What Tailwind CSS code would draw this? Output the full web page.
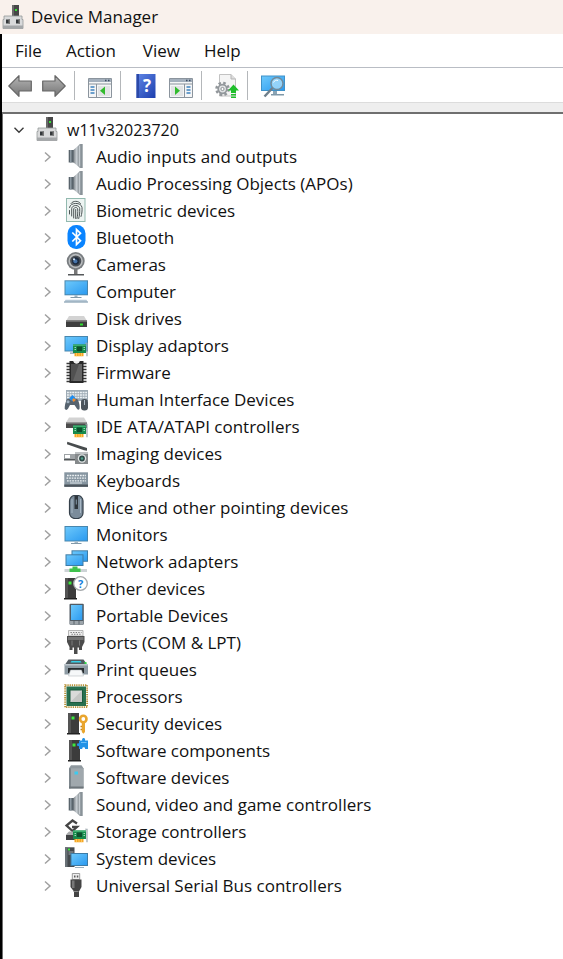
<!DOCTYPE html>
<html lang="en">
<head>
  <meta charset="UTF-8">
  <title>Device Manager</title>
  <script src="https://cdn.jsdelivr.net/npm/@tailwindcss/browser@4"></script>
</head>
<body class="min-h-screen flex flex-col bg-white text-[#111] font-['Open_Sans','Noto_Sans',sans-serif] text-[17px] leading-6">

  <!-- icon sheet -->
  <svg class="absolute w-0 h-0" aria-hidden="true">
    <defs>
      <linearGradient id="screen" x1="0" y1="0" x2="1" y2="1"><stop offset="0" stop-color="#6cc8fb"/><stop offset="1" stop-color="#2b9af0"/></linearGradient>
      <linearGradient id="steel" x1="0" y1="0" x2="1" y2="0"><stop offset="0" stop-color="#7d8489"/><stop offset=".5" stop-color="#c5cbd0"/><stop offset="1" stop-color="#8b9398"/></linearGradient>
      <linearGradient id="arrow" x1="0" y1="0" x2="0" y2="1"><stop offset="0" stop-color="#b5b5b5"/><stop offset="1" stop-color="#757575"/></linearGradient>
      <linearGradient id="help" x1="0" y1="0" x2="1" y2="1"><stop offset="0" stop-color="#5f86e6"/><stop offset="1" stop-color="#1d3fae"/></linearGradient>
    </defs>

    <symbol id="card" viewBox="0 0 15 14">
      <rect x="0" y="2" width="13" height="8.5" fill="#178a4c"/>
      <path d="M0 2h13v1.500H0z" fill="#3eae70"/>
      <rect x="4" y="4" width="5" height="4.500" fill="#0c4f2c"/>
      <path d="M1.500 5h1.500M1.500 7h1.500M10.500 5h1.500M10.500 7h1.500" stroke="#a9e3be" stroke-width=".9"/>
      <rect x="1.500" y="10.500" width="9" height="3.500" fill="#f5a623"/>
      <path d="M3.500 10.500v3.500M6 10.500v3.500M8.500 10.500v3.500" stroke="#ffd47a" stroke-width=".7"/>
      <path d="M12 .5h2V14" fill="none" stroke="#9aa5ab" stroke-width="1.200"/>
    </symbol>
    <symbol id="tower" viewBox="0 0 13 22">
      <path d="M1 0h11v20H1z" fill="#3c3c3c"/>
      <path d="M1 0h3v20H1z" fill="#545454"/>
      <path d="M0 20h13v1.500H0z" fill="#222"/>
      <rect x="4.500" y="3.500" width="3" height="3" fill="#3de83d"/>
    </symbol>

    <symbol id="pc" viewBox="0 0 24 24">
      <path d="M11 0h7v12h-7z" fill="#474747"/><path d="M11 0h2v12h-2z" fill="#6a6a6a"/>
      <rect x="14" y="4" width="2" height="2" fill="#37e337"/>
      <path d="M3 11h18v3.500h1V23.500H2v-9h1z" fill="#d9dadb" stroke="#96999b" stroke-width=".8"/>
      <path d="M2 20.500h20v3H2z" fill="#a4a7a9"/>
      <path d="M5 14.500h4v4H5zM15 14.500h4v4h-4z" fill="#34383b"/>
      <path d="M7.500 14.500h1.500v4H7.500zM17.500 14.500h1.500v4h-1.500z" fill="#777"/>
    </symbol>
    <symbol id="speaker" viewBox="0 0 24 24">
      <path d="M4.700 6H10v12.500H4.700z" fill="#59646c"/><path d="M6 6h1.500v12.500H6z" fill="#8d99a2"/>
      <path d="M9.500 6 15.500 .5v23l-6-5z" fill="url(#steel)"/>
      <path d="M15 .8 16.500 0h2.200v24h-2.200L15 23.200z" fill="#899298"/><path d="M15.700 1.500v21" stroke="#dde2e5" stroke-width=".9"/>
    </symbol>
    <symbol id="finger" viewBox="0 0 24 24">
      <rect x="2.500" y=".5" width="18.500" height="23" fill="#edf4f2" stroke="#92b9af"/>
      <g fill="none" stroke="#4d5557" stroke-width="1" stroke-linecap="round">
        <path d="M7 5.500c2-3 7.500-3 9.500 0M5.500 9.500c.5-5.500 12-5.500 12.500 0 .2 3 0 6-1 9M5.500 12.500v3.500M7.700 18v-7.500c.5-4 7.600-4 8 0 .2 4-.2 7-1 10M9.700 20v-9c.4-2 3.600-2 4 0 .2 3.500 0 6.500-.7 9.500M11.700 11.500v9"/>
      </g>
    </symbol>
    <symbol id="bluetooth" viewBox="0 0 24 24">
      <rect x="3.500" y="0" width="18" height="24" rx="8.500" fill="#0a84ff"/>
      <path d="M8.300 7.500 16.500 15.700 12.500 19.500V4.500l4 3.800L8.300 16.500" fill="none" stroke="#fff" stroke-width="1.700"/>
    </symbol>
    <symbol id="camera" viewBox="0 0 24 24">
      <path d="M10 17h3.500v5H10z" fill="#777"/><path d="M4 22h16v1.500H4z" fill="#55585a"/>
      <circle cx="11.700" cy="9" r="9" fill="#797d80"/><circle cx="11.700" cy="9" r="7.200" fill="#b9bcbe"/>
      <circle cx="11.700" cy="9" r="5.600" fill="#4a4f55"/><circle cx="11.700" cy="9" r="3.700" fill="#1e2c40"/>
      <circle cx="11.400" cy="9.200" r="2" fill="#4674ab"/><circle cx="10" cy="7.300" r="1.100" fill="#d6e8fa"/>
    </symbol>
    <symbol id="computer" viewBox="0 0 24 24">
      <path d="M.5 1.300h23.500v15H.5z" fill="#4886ad"/><path d="M1.500 2.300h21.500v13h-21.500z" fill="url(#screen)"/>
      <path d="M10.500 16.300h3v2h-3z" fill="#9fb3c0"/><path d="M6.500 18h11v1h-11z" fill="#8299a8"/>
      <path d="M1.500 20.800h21l1.500 2.700H0z" fill="#b5c7d5"/><path d="M0 22.500h24v1H0z" fill="#8fa5b5"/>
    </symbol>
    <symbol id="disk" viewBox="0 0 24 24">
      <path d="M5 10h15l3 5H2z" fill="#d3d3d3"/><path d="M2 14.500h21V21H2z" fill="#3f3f3f"/>
      <path d="M2 14.500h21v1.300H2z" fill="#777"/><path d="M16 17.500h3v2h-3z" fill="#2fe02f"/>
    </symbol>
    <symbol id="display" viewBox="0 0 24 24">
      <path d="M.5 3h23.500v15.500H.5z" fill="#4886ad"/><path d="M1.500 4h21.500v13.500h-21.500z" fill="url(#screen)"/>
      <path d="M6 19.500h6v1.200H6z" fill="#8299a8"/><use href="#card" x="9" y="9.500" width="15" height="14"/>
    </symbol>
    <symbol id="firmware" viewBox="0 0 24 24">
      <path d="M2.500 3.500h20M2.500 6.500h20M2.500 9.500h20M2.500 12.500h20M2.500 15.500h20M2.500 18.500h20M2.500 21.500h20" stroke="#383838" stroke-width="1.700"/>
      <path d="M5.500 1h4c.5 3.500 5.500 3.500 6 0h4v22h-14z" fill="#292929"/><path d="M7 4h11v17H7z" fill="#515151"/><path d="M15 4h3v17h-9z" fill="#656565"/>
      <path d="M9.500 1c.5 3.500 5.500 3.500 6 0z" fill="#eee"/>
    </symbol>
    <symbol id="hid" viewBox="0 0 24 24">
      <path d="M2 3h22v11H2z" fill="#9eabb5"/><path d="M3 5.500h20M3 8h20M3 10.500h20" stroke="#edf2f5" stroke-width="1.400" stroke-dasharray="1.900 .7"/>
      <path d="M2.500 13c1-1.800 3-1.500 4-.5h3.500c1.500-1.300 3-1 4 .5 1.300 3 2 6 1.500 9-1 1.500-2.200.8-3.500-1.700L10.500 18H6l-2 3.800c-1.200 1.700-2.700 1.200-3.300 0 0-3 .6-6 1.800-8.800z" fill="#56636f"/>
      <circle cx="4" cy="14.800" r="1.500" fill="#9fb0bf"/><path d="m8.500 8 3.300 3.300-3.300 3.300-3.300-3.300z" fill="#1d8df0"/><path d="m9.500 11 2.500 1.800-2.300 2.200-1.700-2z" fill="#f08a2b"/>
      <rect x="17" y="12" width="7" height="11.500" rx="3.200" fill="#4b545c"/><path d="M20.500 13v5" stroke="#aebbc6"/>
    </symbol>
    <symbol id="ide" viewBox="0 0 24 24">
      <path d="M5 3.500h15l3 5H2z" fill="#d3d3d3"/><path d="M2 8.500h21v5.500H2z" fill="#4c4c4c"/><path d="M2 8.300h21v1.200H2z" fill="#969696"/>
      <use href="#card" x="9" y="9.500" width="15" height="14"/>
    </symbol>
    <symbol id="imaging" viewBox="0 0 24 24">
      <path d="M3.300 .8 23 7v2.800L20 9.300 3 3.200z" fill="#484c4e"/>
      <path d="M0 13h11v5.500H0z" fill="#9ea3a6"/><path d="M1 14h5v3H1z" fill="#fff"/><path d="M0 18h11v1.500H0z" fill="#535759"/>
      <path d="M11 11.500h13V23H11z" fill="#85898b"/><path d="M11 11.500h13V13H11z" fill="#bfc3c5"/>
      <circle cx="18" cy="17.500" r="4.200" fill="#dfe3e4"/><circle cx="18" cy="17.500" r="2.900" fill="#304a48"/><circle cx="18" cy="17.500" r="1.200" fill="#52a18c"/>
    </symbol>
    <symbol id="keyboard" viewBox="0 0 24 24">
      <path d="M.3 4.300H24v14.500H.3z" fill="#8796a1"/><path d="M.3 16.500H24v2.300H.3z" fill="#4d565d"/>
      <path d="M3 7.500h19M2.500 10.200h19.500M3 12.800h19" stroke="#f0f4f6" stroke-width="1.300" stroke-dasharray="1.700 .9"/><path d="M6 15h12" stroke="#dde4e8"/>
    </symbol>
    <symbol id="mouse" viewBox="0 0 24 24">
      <rect x="5.500" y=".5" width="13.500" height="23" rx="5.500" fill="#7b8c9b" stroke="#35404a" stroke-width="1.200"/>
      <path d="M8 4v14M16.500 4v14" stroke="#a8b7c4"/><path d="M10.500 1h3.500v13h-3.500z" fill="#2e353b"/><path d="M11.700 4.500h1.300v5h-1.300z" fill="#718290"/>
    </symbol>
    <symbol id="monitor" viewBox="0 0 24 24">
      <path d="M.5 4H24v15.500H.5z" fill="#4886ad"/><path d="M1.500 5H23v13.500H1.500z" fill="url(#screen)"/>
      <path d="M10.500 19.500h3.500V21h-3.500z" fill="#a8bac6"/><path d="M7 21h10.500v1H7z" fill="#8299a8"/>
    </symbol>
    <symbol id="network" viewBox="0 0 24 24">
      <path d="M7.500 1.300H24v11.500H7.500z" fill="#3d7ba5"/><path d="M8.500 2.300H23v9.500H8.500z" fill="url(#screen)"/>
      <path d="M1.500 5.300h18V17h-18z" fill="#3d7ba5"/><path d="M2.500 6.300h16V16h-16z" fill="url(#screen)"/>
      <path d="M.5 20H23v3H.5z" fill="#cdd3d6"/><path d="M8.500 17.500h5V19.500h3v3.500H5.500v-3.500h3z" fill="#3fc24d"/>
    </symbol>
    <symbol id="other" viewBox="0 0 24 24">
      <use href="#tower" x="0" y="2" width="13" height="22"/>
      <circle cx="16.500" cy="7.500" r="6.800" fill="#fff" stroke="#a5a9ac" stroke-width="1.300"/>
      <text x="16.500" y="11.500" text-anchor="middle" font-family="Open Sans" font-size="11" font-weight="700" fill="#1681dc">?</text>
    </symbol>
    <symbol id="portable" viewBox="0 0 24 24">
      <rect x="5.500" y=".7" width="14.300" height="21" rx="1" fill="#505b64"/><path d="M7 2h11.300v15H7z" fill="url(#screen)"/>
      <path d="M6 18h13.300v3.500H6z" fill="#9da5ab"/><path d="M10 18v3.500M15 18v3.500" stroke="#5b656d"/>
    </symbol>
    <symbol id="ports" viewBox="0 0 24 24">
      <path d="M4.500.5h14.500V6H4.500z" fill="#eee" stroke="#a4a4a4" stroke-width=".8"/><path d="M6.500 2.500h11M7.500 4.300h9" stroke="#777" stroke-dasharray="1.300 1.300"/>
      <path d="M3 6h17.500v6l-2.500 5v3h-3v-2.500h-1.500V24h-3.500v-6.500H8.500V20h-3v-3L3 12z" fill="#4c4c4c"/><path d="M4 7h15.500v3H4z" fill="#737373"/><path d="M8 10.500v5M15.500 10.500v5" stroke="#7b7b7b"/>
    </symbol>
    <symbol id="printer" viewBox="0 0 24 24">
      <path d="M4.500 2.500h15l3.500 5H1z" fill="#525b61"/><path d="M7.500 4h9l1 1.600h-11z" fill="#35cfe6"/>
      <path d="M.5 7h23.500v10.500H.5z" fill="#8d9aa3"/><path d="M.5 7h23.500v1.500H.5z" fill="#bac4cb"/><path d="M20.500 5h2v2h-2z" fill="#34dd4c"/>
      <path d="M4 11h16v5H4z" fill="#262b2e"/><path d="M6.500 13h11l2 6h-15z" fill="#f6f8f9" stroke="#a9b1b5" stroke-width=".5"/>
    </symbol>
    <symbol id="cpu" viewBox="0 0 24 24">
      <rect x="1.200" y="1.200" width="22" height="22" fill="none" stroke="#b8923a" stroke-width="2" stroke-dasharray="1.300 .9"/>
      <path d="M2.500 2.500h19.500V22H2.500z" fill="#27704f"/><path d="M5.500 5.500h13.500V19H5.500z" fill="#1b5b3e"/>
      <path d="M6.500 6.500h11.500V18H6.500z" fill="#d9dad9"/><path d="M18 6.500V18H6.500z" fill="#c3c5c3"/>
    </symbol>
    <symbol id="security" viewBox="0 0 24 24">
      <use href="#tower" x="3" y="2" width="13" height="22"/>
      <circle cx="19.300" cy="8" r="3.200" fill="#fff" stroke="#e9a52d" stroke-width="2.600"/><path d="M17.800 12H21v9l-1.600 1.800L17.800 21z" fill="#e9a52d"/><path d="M16.500 15.500H18M16.500 18.500H18" stroke="#c4831a" stroke-width="1.600"/>
    </symbol>
    <symbol id="component" viewBox="0 0 24 24">
      <use href="#tower" x="4" y="2" width="13" height="22"/>
      <path d="M15 2.500h3.200c-1-3.300 3.800-3.300 2.800 0h3v8.500h-3c.7-2.500-3.300-2.500-2.700 0H15V8c-2.700 1-2.700-3.500 0-2.500z" fill="#2493e6"/><path d="M17 4.500h5.500" stroke="#6fc0f7"/>
    </symbol>
    <symbol id="softdev" viewBox="0 0 24 24">
      <path d="M7 .3h10.500l2 3v20H5v-20z" fill="#8f989e"/><path d="M5 3.300h14.500v20H5z" fill="#a0a8ad"/><path d="M5 3.300h2v20H5z" fill="#7d868c"/>
      <path d="M5 21.500h14.500V23.500H5z" fill="#6d757a"/><path d="M10.500 6.500h3.500v3h-3.500z" fill="#3ccbf0"/>
    </symbol>
    <symbol id="storage" viewBox="0 0 24 24">
      <path d="M13 4.500 8.500 1.500 2.500 6.500 8.500 12 13 8H8" fill="none" stroke="#444" stroke-width="2.300"/>
      <path d="M2 15.500 5 12.500h6v8H2z" fill="#a7a9aa"/><path d="M2 16h9v5H2z" fill="#404244"/>
      <use href="#card" x="9" y="9.500" width="15" height="14"/>
    </symbol>
    <symbol id="system" viewBox="0 0 24 24">
      <path d="M1 1.300h9.500V21H1z" fill="#454a4e"/><path d="M1 1.300h2.500V21H1z" fill="#697177"/><path d="M4.500 6h5M4.500 8h5" stroke="#9ca3a8"/><path d="M4 2.500h2v2H4z" fill="#3de83d"/>
      <path d="M6.500 7H24v13H6.500z" fill="#3d7ba5"/><path d="M7.500 8H23v11H7.500z" fill="url(#screen)"/><path d="M11 21h9v1h-9z" fill="#9cb0bd"/>
    </symbol>
    <symbol id="usb" viewBox="0 0 24 24">
      <path d="M8.300.5h7.400v6H8.300z" fill="#eee" stroke="#929292" stroke-width=".9"/><path d="M10 2.500h1.500v2H10zM12.800 2.500h1.500v2h-1.500z" fill="#5a5a5a"/>
      <path d="M6.500 6.500h11V14l-2.500 4.500V24h-5v-5.500L6.500 14z" fill="#444"/><path d="M8 7.500h2.500V15H8z" fill="#787878"/><path d="M9.500 18.500h5" stroke="#888"/>
    </symbol>
  </svg>

  <header class="flex items-center h-[34px] pl-px gap-[6px] bg-[#f9f1ec]">
    <svg class="w-6 h-6 shrink-0" aria-hidden="true"><use href="#pc"/></svg>
    <h1>Device Manager</h1>
  </header>

  <div class="flex flex-col grow border-l-2 border-black">
    <nav class="flex items-center h-[33px] pl-[13px] gap-6">
      <button type="button">File</button>
      <button type="button">Action</button>
      <button type="button" class="ml-[3px]">View</button>
      <button type="button">Help</button>
    </nav>

    <div role="toolbar" aria-label="Tools" class="flex items-center h-9 pt-px pl-[6px] border-y border-t-[#b9bdc4] border-b-[#dcdcdc]">
      <button type="button" aria-label="Back" class="w-6 h-6">
        <svg viewBox="0 0 24 24"><path d="M.8 12 11 1.700V7h12.300v10H11v5.300z" fill="url(#arrow)" stroke="#666" stroke-width="1.200" stroke-linejoin="round"/></svg>
      </button>
      <button type="button" aria-label="Forward" class="w-6 h-6 ml-[10px]">
        <svg viewBox="0 0 24 24"><path d="M23.200 12 13 1.700V7H.7v10H13v5.300z" fill="url(#arrow)" stroke="#666" stroke-width="1.200" stroke-linejoin="round"/></svg>
      </button>
      <span class="w-px h-[29px] ml-2 mr-[13px] bg-[#b4b7ba]"></span>
      <button type="button" aria-label="Show console tree" class="w-6 h-6">
        <svg viewBox="0 0 24 24"><path d="M.5 4.500h23v19H.5z" fill="#f5f6f7" stroke="#8b949d"/><path d="M1 5h22v3H1z" fill="#a4b0bd"/><path d="M17 6.500h1.500M20 6.500h1.500" stroke="#394a61" stroke-width="1.300"/><path d="M1 10h22M8.500 10v13" stroke="#8b949d"/><path d="M2.500 13h4M2.500 16h4M2.500 19h4" stroke="#3e83bf" stroke-width="1.300"/><path d="M10 12h12v10H10z" fill="#e2e4e5"/><path d="M17 12.500v8.500l-5-4.200z" fill="#31bb2d"/></svg>
      </button>
      <span class="w-px h-[29px] ml-2 mr-[13px] bg-[#b4b7ba]"></span>
      <button type="button" aria-label="Help topics" class="w-6 h-6">
        <svg viewBox="0 0 24 24"><path d="M2.500 0H21.500v24H2.500z" fill="url(#help)"/><path d="M2.500 0H5v24H2.500z" fill="#2b49a8"/><text x="13" y="18" text-anchor="middle" font-family="Open Sans" font-size="17" font-weight="700" fill="#fff">?</text></svg>
      </button>
      <button type="button" aria-label="Show action pane" class="w-6 h-6 ml-[11px]">
        <svg viewBox="0 0 24 24"><path d="M.5 4.500h23v19H.5z" fill="#f5f6f7" stroke="#8b949d"/><path d="M1 5h22v3H1z" fill="#a4b0bd"/><path d="M17 6.500h1.500M20 6.500h1.500" stroke="#394a61" stroke-width="1.300"/><path d="M1 10h22M15.500 10v13" stroke="#8b949d"/><path d="M17.500 13h4M17.500 16h4M17.500 19h4" stroke="#3e83bf" stroke-width="1.300"/><path d="M2 12h12v10H2z" fill="#e2e4e5"/><path d="M6 12.500v8.500l5-4.200z" fill="#31bb2d"/></svg>
      </button>
      <span class="w-px h-[29px] ml-2 mr-[13px] bg-[#b4b7ba]"></span>
      <button type="button" aria-label="Update driver" class="w-6 h-6">
        <svg viewBox="0 0 24 24"><path d="M4.500.5H16l4.500 4.500v17H4.500z" fill="#f4f4f4" stroke="#c2c2c2"/><path d="M16 .5V5h4.500" fill="#ddd" stroke="#b5b5b5"/><circle cx="7.500" cy="15" r="6" fill="none" stroke="#92979b" stroke-width="2.600" stroke-dasharray="2.500 2.212"/><circle cx="7.500" cy="15" r="4.300" fill="#e3e5e6" stroke="#92979b" stroke-width="1.700"/><circle cx="7.500" cy="15" r="1.600" fill="#fff" stroke="#8c9195"/><path d="m18.500 10.500 5.500 6h-3V19h-5v-2.500h-3z" fill="#1fbf2b"/><path d="M16 20h5v1.500h-5zM16 22.500h5V24h-5z" fill="#1fbf2b"/></svg>
      </button>
      <span class="w-px h-[29px] ml-2 mr-[13px] bg-[#b4b7ba]"></span>
      <button type="button" aria-label="Scan for hardware changes" class="w-6 h-6">
        <svg viewBox="0 0 24 24"><path d="M0 1.500h24v15.500H0z" fill="#3f92c9"/><path d="M1 2.500h22V16H1z" fill="url(#screen)"/><path d="M12 17h4v3h-4z" fill="#8ba5b6"/><path d="M10 20h13v1.500H10z" fill="#7f98a8"/><path d="m11.500 14-8 8.500" stroke="#6f7f8b" stroke-width="2.400"/><circle cx="16" cy="9.500" r="6" fill="#a8dcfa" fill-opacity=".8" stroke="#728b9b" stroke-width="1.500"/><path d="M12.500 8.500c.8-2 3-2.800 4.500-2" fill="none" stroke="#fff"/></svg>
      </button>
    </div>

    <main class="flex flex-col grow bg-[#eee] pt-[9px]">
      <div class="grow bg-white border-l border-t-2 border-[#6f6f6f] pt-0.5">
        <button type="button" aria-expanded="true" class="flex items-center h-[27px] pt-px pl-[11px] text-base">
          <svg viewBox="0 0 10 10" class="w-[10px] h-[10px] mr-[11px]" fill="none" stroke="#3a3a3a" stroke-width="1.400"><path d="m.5 2.800 4.500 4.500 4.500-4.500"/></svg>
          <svg class="w-6 h-6 mr-2 mb-0.5" aria-hidden="true"><use href="#pc"/></svg>
          <span>w11v32023720</span>
        </button>
        <ul id="deviceList"></ul>
      </div>
    </main>
  </div>

  <script>
    const devices = [
      ['speaker', 'Audio inputs and outputs'],
      ['speaker', 'Audio Processing Objects (APOs)'],
      ['finger', 'Biometric devices'],
      ['bluetooth', 'Bluetooth'],
      ['camera', 'Cameras'],
      ['computer', 'Computer'],
      ['disk', 'Disk drives'],
      ['display', 'Display adaptors'],
      ['firmware', 'Firmware'],
      ['hid', 'Human Interface Devices'],
      ['ide', 'IDE ATA/ATAPI controllers'],
      ['imaging', 'Imaging devices'],
      ['keyboard', 'Keyboards'],
      ['mouse', 'Mice and other pointing devices'],
      ['monitor', 'Monitors'],
      ['network', 'Network adapters'],
      ['other', 'Other devices'],
      ['portable', 'Portable Devices'],
      ['ports', 'Ports (COM & LPT)'],
      ['printer', 'Print queues'],
      ['cpu', 'Processors'],
      ['security', 'Security devices'],
      ['component', 'Software components'],
      ['softdev', 'Software devices'],
      ['speaker', 'Sound, video and game controllers'],
      ['storage', 'Storage controllers'],
      ['system', 'System devices'],
      ['usb', 'Universal Serial Bus controllers']
    ];

    document.getElementById('deviceList').innerHTML = devices.map(([icon, name]) => `
      <li>
        <button type="button" aria-expanded="false" class="flex items-center h-[27px] pt-px pl-10 whitespace-nowrap">
          <svg viewBox="0 0 10 12" class="w-[10px] h-3 mr-[11px]" fill="none" stroke="#a0a0a0" stroke-width="1.500"><path d="m2 1.500 5 4.500-5 4.500"/></svg>
          <svg class="w-6 h-6 mr-2 mb-0.5" aria-hidden="true"><use href="#${icon}"/></svg>
          <span>${name.replace('&', '&amp;')}</span>
        </button>
      </li>`).join('');
  </script>
</body>
</html>
